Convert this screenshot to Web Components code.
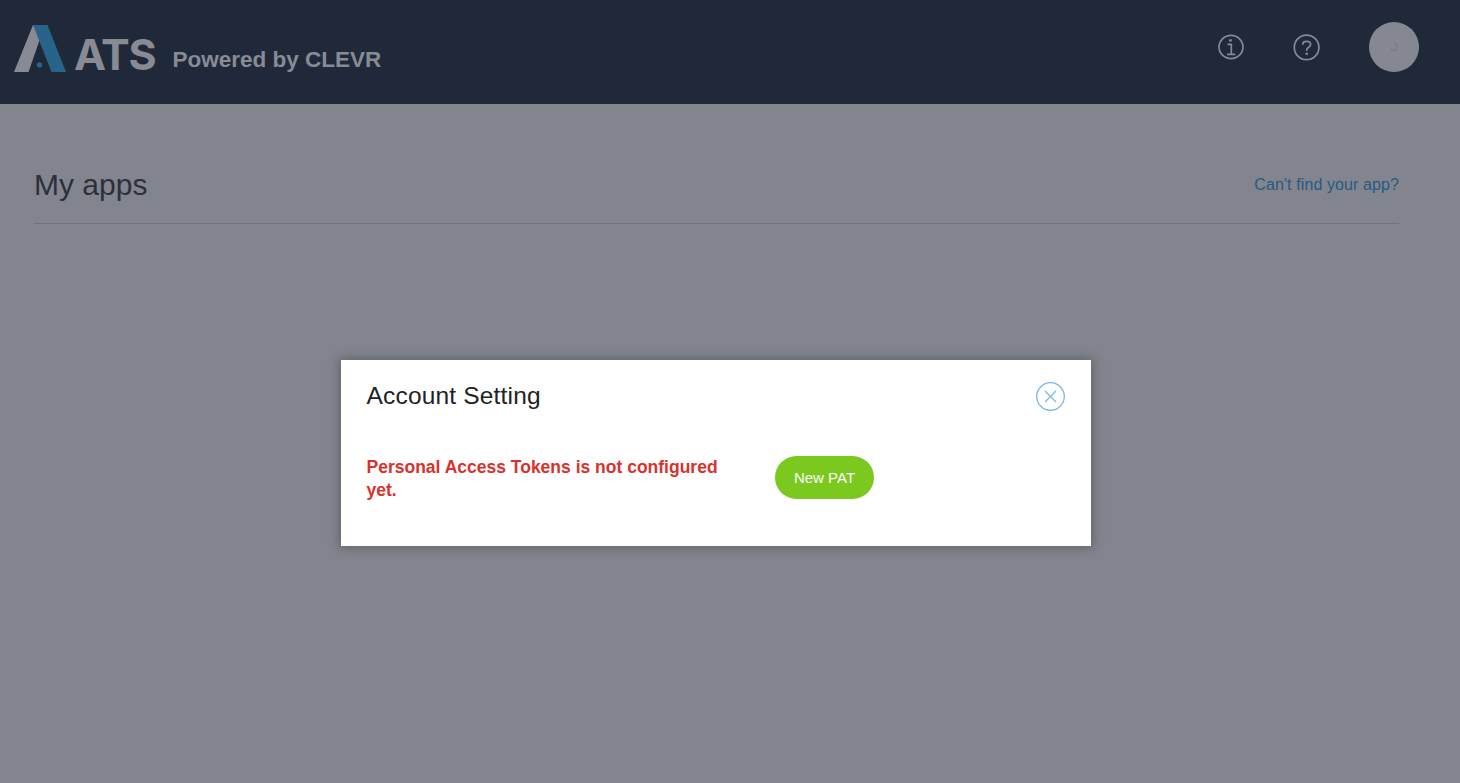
<!DOCTYPE html>
<html lang="en">
<head>
<meta charset="utf-8">
<title>ATS - My apps</title>
<style>
html, body { margin: 0; height: 100%; overflow: hidden; }
body { font-family: "Liberation Sans", Arial, sans-serif; background: #82858e; }
</style>
</head>
<body>
<ats-app></ats-app>
<script>
function define(name, html) {
  const tpl = document.createElement('template');
  tpl.innerHTML = html;
  customElements.define(name, class extends HTMLElement {
    constructor() {
      super();
      this.attachShadow({ mode: 'open' }).appendChild(tpl.content.cloneNode(true));
    }
  });
}

define('ats-logo', `
<style>
:host { display: flex; align-items: flex-start; color: #898b94; }
svg { display: block; width: 52px; height: 48px; margin-top: 25px; }
.name { width: 83px; margin: 28px 0 0 8px; font: 700 43px/52px Inter, sans-serif; letter-spacing: -1.2px; white-space: nowrap; }
.by { margin: 46px 0 0 15.5px; font-weight: 700; font-size: 22.5px; line-height: 28px; white-space: nowrap; }
</style>
<svg viewBox="0 0 52 48">
  <path d="M0 47 L19 0 H22 L26 14 L14.5 47Z" fill="#898b94"/>
  <path d="M19 0 H33.5 L52 47 H37.5Z" fill="#286489"/>
  <circle cx="25.5" cy="40" r="2.7" fill="#286489"/>
</svg>
<span class="name">ATS</span><span class="by">Powered by CLEVR</span>`);

define('info-icon', `
<style>:host { display: block; width: 26px; height: 26px; } svg { display: block; }</style>
<svg width="26" height="26" viewBox="0 0 26 26" fill="none" stroke="#858a95" stroke-width="1.7">
  <ellipse cx="13" cy="13" rx="12" ry="11.6"/>
  <path d="M9.5 10.3H13.3V20M9 20.3H17.3"/><path d="M11 6.4h2.8" stroke-width="2.2"/>
</svg>`);

define('help-icon', `
<style>:host { display: block; width: 28px; height: 28px; } svg { display: block; }</style>
<svg width="28" height="28" viewBox="0 0 28 28" fill="none" stroke="#858a95" stroke-width="1.7">
  <circle cx="13.6" cy="14.4" r="12.3"/>
  <path d="M9.8 11.7V11C9.9 9.3 11.5 8.4 13.7 8.4C16.2 8.4 17.6 9.5 17.6 11.4C17.6 12.8 16.7 13.5 15.6 14.2C14.2 15.1 13.7 15.6 13.7 16.8V18"/>
  <path d="M13.7 19.8v2" stroke-width="2.6"/>
</svg>`);

define('user-avatar', `
<style>
:host { display: grid; place-items: center; width: 50px; height: 50px; border-radius: 50%; background: #868891; }
</style>
<svg width="10" height="10" viewBox="0 0 10 10" fill="none" stroke="#7b7d87" stroke-width="1.4"><path d="M5.5 1.7A3.3 3.3 0 1 1 2 6"/></svg>`);

define('app-header', `
<style>
:host { display: flex; justify-content: space-between; align-items: flex-start; height: 104px; box-sizing: border-box; padding: 0 41px 0 14px; background: #1f293a; }
nav { display: flex; align-items: center; margin-top: 22px; }
help-icon { margin: 0 48px 0 49px; }
</style>
<ats-logo></ats-logo>
<nav><info-icon></info-icon><help-icon></help-icon><user-avatar></user-avatar></nav>`);

define('page-heading', `
<style>
:host { display: flex; justify-content: space-between; align-items: center; height: 78px; box-sizing: border-box; margin: 42px 61px 0 34px; border-bottom: 1px solid #70737c; }
h1 { margin: 0; padding-top: 1px; font-weight: 400; font-size: 30px; line-height: 36px; color: #2d3038; }
::slotted(a) { color: #285981; font-size: 16px; letter-spacing: .1px; line-height: 24px; text-decoration: none; }
</style>
<h1><slot></slot></h1><slot name="action"></slot>`);

define('close-button', `
<style>
:host { display: block; width: 30px; height: 30px; }
button { display: block; padding: 0; border: 0; background: none; }
svg { display: block; }
</style>
<button aria-label="Close"><svg width="30" height="30" viewBox="0 0 30 30" fill="none" stroke="#7db7e2" stroke-width="1.3"><circle cx="14.5" cy="15.5" r="13.8"/><path d="M9 10l11 11M20 10l-11 11"/></svg></button>`);

define('pill-button', `
<style>
:host { display: block; }
button { display: block; width: 99px; height: 43px; padding: 0; border: 0; border-radius: 22px; background: #7bc81e; color: #fff; font: 15px "Liberation Sans", Arial, sans-serif; white-space: nowrap; }
</style>
<button><slot></slot></button>`);

define('modal-dialog', `
<style>
:host { position: absolute; left: 341px; top: 360px; display: flex; flex-direction: column; width: 750px; height: 186px; box-sizing: border-box; padding: 21px 25px 0 25.5px; background: #fff; box-shadow: 0 0 9px 2px rgba(78,78,86,.6); }
header { display: flex; justify-content: space-between; align-items: flex-start; height: 75px; }
h2 { margin: 0; font-weight: 400; font-size: 24.5px; letter-spacing: .18px; line-height: 29px; color: #222; }
.body { display: grid; grid-template-columns: 408.5px auto; justify-content: start; align-items: start; }
</style>
<header><h2><slot name="title"></slot></h2><close-button></close-button></header>
<div class="body"><slot></slot></div>`);

define('status-message', `
<style>
:host { display: block; width: 370px; color: #d9322d; font-weight: 700; font-size: 17.5px; line-height: 23px; }
</style><slot></slot>`);

define('ats-app', `
<style>
:host { display: block; height: 100vh; position: relative; }
</style>
<app-header></app-header>
<main>
  <page-heading>My apps<a slot="action" href="#">Can't find your app?</a></page-heading>
</main>
<modal-dialog role="dialog">
  <span slot="title">Account Setting</span>
  <status-message>Personal Access Tokens is not configured yet.</status-message>
  <pill-button>New PAT</pill-button>
</modal-dialog>`);
</script>
</body>
</html>
